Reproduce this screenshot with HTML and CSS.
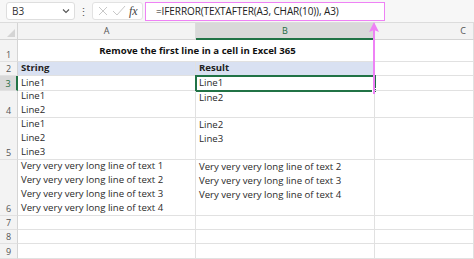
FILE: index.html
```html
<!DOCTYPE html>
<html lang="en">
<head>
  <meta charset="UTF-8">
  <title>Remove the first line in a cell</title>
  <link rel="stylesheet" href="styles.css">
</head>
<body>
  <div class="bar">
    <div class="namebox">
      <span>B3</span>
      <svg class="chev" width="8" height="6" viewBox="0 0 8 6"><path d="M1 1.5 L4 4.5 L7 1.5" fill="none" stroke="#555" stroke-width="1.1"/></svg>
    </div>
    <div class="dots">&#8942;</div>
    <div class="fxbox">
      <svg width="12" height="12" viewBox="0 0 12 12"><path d="M2 2 L10 10 M10 2 L2 10" stroke="#c8c8c8" stroke-width="1"/></svg>
      <svg width="14" height="12" viewBox="0 0 14 12"><path d="M1 6 L5 10 L13 1" fill="none" stroke="#c8c8c8" stroke-width="1"/></svg>
      <span class="fx">fx</span>
    </div>
    <div class="formula">=IFERROR(TEXTAFTER(A3, CHAR(10)), A3)</div>
  </div>

  <div class="sheet">
    <div class="corner"><svg width="8" height="8" viewBox="0 0 8 8"><path d="M8 0 L8 8 L0 8 Z" fill="#d4d4d4"/></svg></div>
    <div class="colhead">A</div>
    <div class="colhead active">B</div>
    <div class="colhead last">C</div>

    <div class="rowhead">1</div>
    <div class="cell title">Remove the first line in a cell in Excel 365</div>
    <div class="cell"></div>

    <div class="rowhead">2</div>
    <div class="cell head">String</div>
    <div class="cell head">Result</div>
    <div class="cell"></div>

    <div class="rowhead active">3</div>
    <div class="cell">Line1</div>
    <div class="cell selected">Line1<span class="handle"></span></div>
    <div class="cell"></div>

    <div class="rowhead">4</div>
    <div class="cell">Line1<br>Line2</div>
    <div class="cell top">Line2</div>
    <div class="cell"></div>

    <div class="rowhead">5</div>
    <div class="cell">Line1<br>Line2<br>Line3</div>
    <div class="cell top">Line2<br>Line3</div>
    <div class="cell"></div>

    <div class="rowhead">6</div>
    <div class="cell">Very very very long line of text 1<br>Very very very long line of text 2<br>Very very very long line of text 3<br>Very very very long line of text 4</div>
    <div class="cell top">Very very very long line of text 2<br>Very very very long line of text 3<br>Very very very long line of text 4</div>
    <div class="cell"></div>

    <div class="rowhead">7</div>
    <div class="cell"></div>
    <div class="cell"></div>
    <div class="cell"></div>

    <div class="rowhead">8</div>
    <div class="cell"></div>
    <div class="cell"></div>
    <div class="cell"></div>

    <div class="rowhead">9</div>
    <div class="cell"></div>
    <div class="cell"></div>
    <div class="cell"></div>
  </div>

  <!-- pink arrow from formula to cell -->
  <div class="arrow">
    <svg width="12" height="72" viewBox="0 0 12 72"><path d="M6 0 L11 10 L6 8 L1 10 Z" fill="#ee82f5"/><path d="M6 6 L6 72" stroke="#ee82f5" stroke-width="2"/></svg>
  </div>
</body>
</html>
```

FILE: styles.css
```css
* {
  box-sizing: border-box;
}

body {
  margin: 0;
  width: 474px;
  height: 259px;
  overflow: hidden;
  background: #fff;
  font-family: "Open Sans", "Noto Sans", sans-serif;
  color: #222;
  position: relative;
}

.bar {
  height: 23px;
  background: #f7f7f7;
  border-bottom: 1px solid #dcdcdc;
  display: flex;
  align-items: center;
  padding-left: 6px;
}

.namebox {
  width: 69px;
  height: 18px;
  background: #fff;
  border: 1px solid #dedede;
  border-radius: 3px;
  display: flex;
  align-items: center;
  justify-content: space-between;
  padding: 0 4px 0 5px;
  font-size: 10px;
  color: #333;
}

.dots {
  width: 17px;
  text-align: center;
  font-size: 11px;
  color: #555;
}

.fxbox {
  width: 51px;
  height: 18px;
  background: #fff;
  border: 1px solid #e2e2e2;
  border-radius: 3px;
  display: flex;
  align-items: center;
  gap: 3px;
  padding-left: 4px;
}

.fx {
  font-family: "Liberation Serif", serif;
  font-style: italic;
  font-size: 12px;
  color: #444;
}

.formula {
  margin-left: 2px;
  width: 240px;
  height: 19px;
  background: #fff;
  border: 1.5px solid #ee82f5;
  font-size: 10px;
  line-height: 16px;
  padding-left: 10px;
  color: #222;
  letter-spacing: -0.1px;
}

.sheet {
  display: grid;
  grid-template-columns: 18px 178px 179px 99px;
  grid-template-rows: 17px 22px 14px 15px 27px 42px 56px 14px 14px 15px;
  font-size: 10px;
}

.corner {
  background: #f3f3f3;
  border-bottom: 1px solid #d4d4d4;
  border-right: 1px solid #d4d4d4;
  display: flex;
  align-items: flex-end;
  justify-content: flex-end;
  padding: 0 2px 2px 0;
}

.colhead {
  background: #f3f3f3;
  border-bottom: 1px solid #d4d4d4;
  border-right: 1px solid #dcdcdc;
  text-align: center;
  font-size: 9px;
  line-height: 16px;
  color: #555;
}

.colhead.last {
  text-align: right;
  padding-right: 7px;
}

.colhead.active {
  background: #d9d9d9;
  color: #1e6b41;
  border-bottom: 2px solid #217346;
}

.rowhead {
  background: #f3f3f3;
  border-right: 1px solid #d4d4d4;
  border-bottom: 1px solid #e1e1e1;
  font-size: 9px;
  color: #555;
  display: flex;
  align-items: flex-end;
  justify-content: center;
  line-height: 13px;
}

.rowhead.active {
  background: #d9d9d9;
  color: #1e6b41;
  border-right: 2px solid #217346;
}

.cell {
  border-right: 1px solid #e1e1e1;
  border-bottom: 1px solid #e1e1e1;
  padding-left: 3px;
  line-height: 14px;
  font-size: 9.6px;
  color: #2a2a2a;
  white-space: nowrap;
  display: flex;
  flex-direction: column;
  justify-content: flex-end;
  position: relative;
}

.cell.top {
  justify-content: flex-start;
}

.title {
  grid-column: 2 / 4;
  text-align: center;
  align-items: center;
  font-weight: 700;
  color: #111;
  padding-bottom: 3px;
}

.head {
  background: #d9e1f2;
  font-weight: 700;
  color: #222;
}

.selected {
  outline: 2px solid #217346;
  outline-offset: -1px;
}

.handle {
  position: absolute;
  right: -3px;
  bottom: -3px;
  width: 5px;
  height: 5px;
  background: #217346;
  border: 1px solid #fff;
}

.arrow {
  position: absolute;
  left: 368px;
  top: 22px;
}
```
